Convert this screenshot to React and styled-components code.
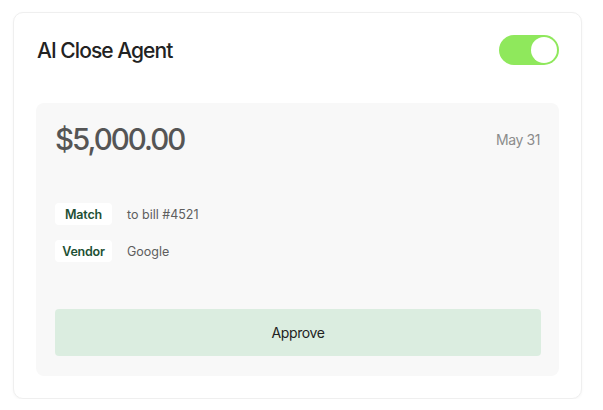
import React from "react";
import styled, { createGlobalStyle } from "styled-components";

const Global = createGlobalStyle`
  html, body { margin: 0; padding: 0; background: #ffffff; }
  body { font-family: Inter, "Noto Sans", sans-serif; -webkit-font-smoothing: antialiased; }
  * { box-sizing: border-box; }
`;

const Page = styled.div`
  padding: 12px 0 0 13px;
`;

const Card = styled.div`
  width: 569px;
  height: 387px;
  background: #fff;
  border: 1px solid #efefef;
  border-radius: 10px;
  box-shadow: 0 1px 3px rgba(0, 0, 0, 0.04);
  padding: 22px;
  display: flex;
  flex-direction: column;
`;

const Header = styled.div`
  display: flex;
  align-items: center;
  justify-content: space-between;
  height: 30px;
  margin-bottom: 38px;
`;

const Title = styled.h1`
  margin: 0 0 0 1px;
  font-size: 21px;
  font-weight: 500;
  letter-spacing: -0.95px;
  color: #222;
`;

const Toggle = styled.div`
  width: 60px;
  height: 30px;
  border-radius: 15px;
  background: ${(p) => (p.$on ? "#8fe85c" : "#ddd")};
  padding: 2px;
  display: flex;
  justify-content: ${(p) => (p.$on ? "flex-end" : "flex-start")};
`;

const Knob = styled.div`
  width: 26px;
  height: 26px;
  border-radius: 50%;
  background: #fff;
`;

const Panel = styled.div`
  flex: 1;
  background: #f8f8f8;
  border-radius: 8px;
  padding: 18px 18px 20px 19px;
  display: flex;
  flex-direction: column;
`;

const TopRow = styled.div`
  display: flex;
  justify-content: space-between;
  align-items: center;
  height: 36px;
  margin-bottom: 46px;
`;

const Amount = styled.div`
  font-size: 29.5px;
  font-weight: 500;
  letter-spacing: -2px;
  color: #555;
  line-height: 36px;
`;

const DateText = styled.div`
  font-size: 14px;
  color: #8c8c8c;
  letter-spacing: -0.4px;
  margin-right: 1px;
`;

const Rows = styled.div`
  display: flex;
  flex-direction: column;
  gap: 15px;
  margin-bottom: 47px;
`;

const Row = styled.div`
  display: flex;
  align-items: center;
  gap: 15px;
  height: 22px;
`;

const Badge = styled.span`
  width: 57px;
  height: 22px;
  background: #fff;
  border-radius: 4px;
  display: flex;
  align-items: center;
  justify-content: center;
  font-size: 12.5px;
  font-weight: 600;
  color: #1d5034;
  letter-spacing: -0.2px;
`;

const Value = styled.span`
  font-size: 12.5px;
  color: #5e5e5e;
`;

const Button = styled.button`
  height: 47px;
  border: none;
  border-radius: 4px;
  background: #dbede0;
  font-family: inherit;
  font-size: 14px;
  color: #222;
  letter-spacing: -0.4px;
  cursor: pointer;
`;

export default function App() {
  return (
    <Page>
      <Global />
      <Card>
        <Header>
          <Title>AI Close Agent</Title>
          <Toggle $on>
            <Knob />
          </Toggle>
        </Header>
        <Panel>
          <TopRow>
            <Amount>$5,000.00</Amount>
            <DateText>May 31</DateText>
          </TopRow>
          <Rows>
            <Row>
              <Badge>Match</Badge>
              <Value>to bill #4521</Value>
            </Row>
            <Row>
              <Badge>Vendor</Badge>
              <Value>Google</Value>
            </Row>
          </Rows>
          <Button>Approve</Button>
        </Panel>
      </Card>
    </Page>
  );
}
